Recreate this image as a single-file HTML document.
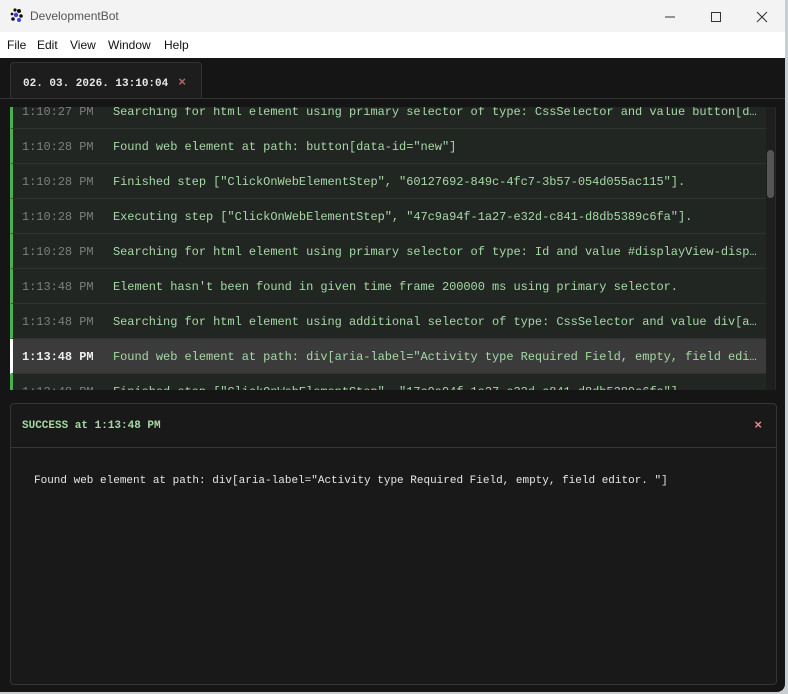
<!DOCTYPE html>
<html><head><style>
*{margin:0;padding:0;box-sizing:border-box}
body{width:788px;height:694px;background:#c9ced3;overflow:hidden;font-family:"Liberation Sans",sans-serif}
.win{position:absolute;left:0;top:0;width:785px;height:692px;background:#151515;border-radius:0 0 8px 0;overflow:hidden}
.title{height:32px;background:#f3f3f3;position:relative;font-size:12px;color:#555}
.title .t{position:absolute;left:30px;top:9px}
.menu{height:26px;background:#fff;font-size:12px;color:#111}
.menu span{position:absolute;top:38px}
.tab{position:absolute;left:10px;top:62px;width:192px;height:37px;background:#1d1d1d;border:1px solid #333;border-bottom:none;border-radius:4px 4px 0 0;font:bold 11px "Liberation Mono",monospace;color:#e8e8e8;padding:12px 0 0 12px}
.tab b{color:#b06a6a;margin-left:10px;font-size:13px}
.sep{position:absolute;left:0;top:98px;width:785px;height:1px;background:#333}
.log{position:absolute;left:10px;top:107px;width:766px;height:283px;overflow:hidden;background:#1e1e1e;border-right:1px solid #2a2a2a}
.row{position:absolute;left:0;width:756px;height:35px;background:#222623;border-left:3px solid #4caf50;border-bottom:1px solid #2f332f;font:12px "Liberation Mono",monospace;white-space:nowrap;letter-spacing:-0.05px}
.row .tm{position:absolute;left:9px;top:11px;color:#7d7d7d}
.row .m{position:absolute;left:100px;top:11px;color:#a6d8a6}
.row.sel{background:#3b3b3b;border-left-color:#fff}
.row.sel .tm{color:#eee;font-weight:bold}
.sb{position:absolute;left:767px;top:150px;width:7px;height:48px;background:#555;border-radius:4px}
.panel{position:absolute;left:10px;top:403px;width:767px;height:282px;background:#191919;border:1px solid #363636;border-radius:4px}
.ph{height:44px;border-bottom:1px solid #363636;font:bold 11px "Liberation Mono",monospace;color:#a6d8a6;padding:16px 0 0 11px;position:relative}
.ph b{position:absolute;right:14px;top:14px;color:#e88;font-size:13px}
.pb{font:11px "Liberation Mono",monospace;color:#e6e6e6;padding:27px 0 0 23px}
</style></head><body>
<div class="win">
<div class="title">
<svg style="position:absolute;left:10px;top:8px" width="14" height="15" viewBox="0 0 14 15"><circle cx="5" cy="2" r="1.6" fill="#111"/><circle cx="9" cy="3" r="2" fill="#111"/><circle cx="2" cy="6" r="1.4" fill="#111"/><circle cx="6" cy="7" r="2.2" fill="#3b3bd6"/><circle cx="11" cy="8" r="1.8" fill="#111"/><circle cx="3" cy="11" r="1.8" fill="#111"/><circle cx="9" cy="12" r="2" fill="#4040e0"/></svg>
<span class="t">DevelopmentBot</span>
<svg style="position:absolute;left:660px;top:10px" width="120" height="14"><line x1="5" y1="7" x2="15" y2="7" stroke="#333"/><rect x="51.5" y="2.5" width="9" height="9" fill="none" stroke="#333"/><line x1="97" y1="2" x2="107" y2="12" stroke="#333"/><line x1="107" y1="2" x2="97" y2="12" stroke="#333"/></svg>
</div>
<div class="menu"><span style="left:7px">File</span><span style="left:37px">Edit</span><span style="left:70px">View</span><span style="left:108px">Window</span><span style="left:164px">Help</span></div>
<div class="tab">02. 03. 2026. 13:10:04<b>×</b></div>
<div class="sep"></div>
<div class="log">
<div class="row" style="top:-13px"><span class="tm">1:10:27 PM</span><span class="m">Searching for html element using primary selector of type: CssSelector and value button[d…</span></div>
<div class="row" style="top:22px"><span class="tm">1:10:28 PM</span><span class="m">Found web element at path: button[data-id="new"]</span></div>
<div class="row" style="top:57px"><span class="tm">1:10:28 PM</span><span class="m">Finished step ["ClickOnWebElementStep", "60127692-849c-4fc7-3b57-054d055ac115"].</span></div>
<div class="row" style="top:92px"><span class="tm">1:10:28 PM</span><span class="m">Executing step ["ClickOnWebElementStep", "47c9a94f-1a27-e32d-c841-d8db5389c6fa"].</span></div>
<div class="row" style="top:127px"><span class="tm">1:10:28 PM</span><span class="m">Searching for html element using primary selector of type: Id and value #displayView-disp…</span></div>
<div class="row" style="top:162px"><span class="tm">1:13:48 PM</span><span class="m">Element hasn't been found in given time frame 200000 ms using primary selector.</span></div>
<div class="row" style="top:197px"><span class="tm">1:13:48 PM</span><span class="m">Searching for html element using additional selector of type: CssSelector and value div[a…</span></div>
<div class="row sel" style="top:232px"><span class="tm">1:13:48 PM</span><span class="m">Found web element at path: div[aria-label="Activity type Required Field, empty, field edi…</span></div>
<div class="row" style="top:267px"><span class="tm">1:13:48 PM</span><span class="m">Finished step ["ClickOnWebElementStep", "17c9a94f-1a27-e32d-c841-d8db5389c6fa"].</span></div>
</div>
<div class="sb"></div>
<div class="panel">
<div class="ph">SUCCESS at 1:13:48 PM<b>×</b></div>
<div class="pb">Found web element at path: div[aria-label="Activity type Required Field, empty, field editor. "]</div>
</div>
</div>
</body></html>
